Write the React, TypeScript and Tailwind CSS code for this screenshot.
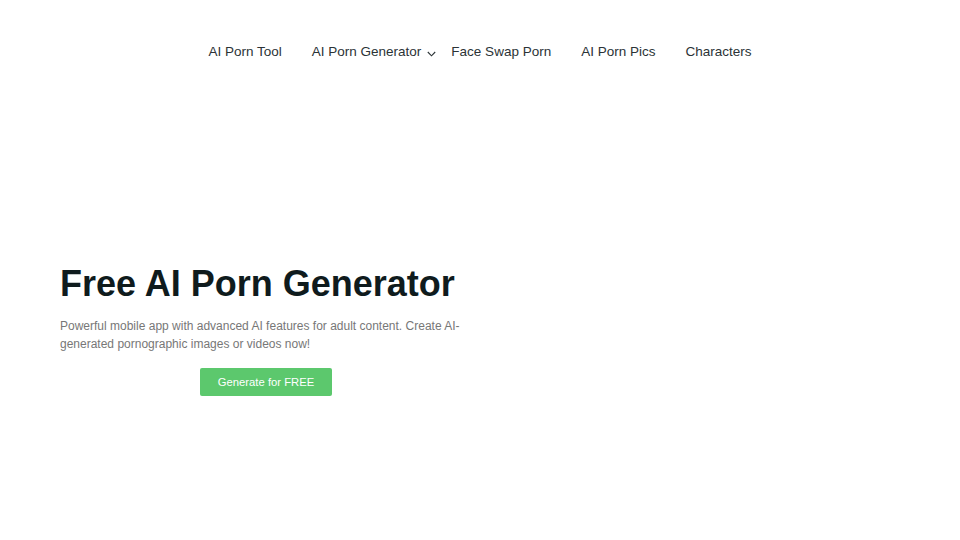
import React from "react";

const navItems = ["AI Porn Tool", "AI Porn Generator", "Face Swap Porn", "AI Porn Pics", "Characters"];

export default function App() {
  return (
    <div className="w-[960px] h-[540px] bg-white overflow-hidden" style={{ fontFamily: '"Liberation Sans", Arial, sans-serif' }}>
      <nav className="h-[104px] flex items-center justify-center gap-[30px] text-[13.5px] text-[#2b3336]">
        {navItems.map((item) => (
          <span key={item} className="relative">
            {item}
            {item === "AI Porn Generator" && (
              <svg
                className="absolute left-full top-1/2 ml-[6px] mt-[-1px] w-[9px] h-[6px]"
                viewBox="0 0 9 6"
                fill="none"
                stroke="#2b3336"
                strokeWidth="1.1"
              >
                <path d="M0.8 1 L4.5 4.8 L8.2 1" />
              </svg>
            )}
          </span>
        ))}
      </nav>
      <section className="pt-[158px] pl-[60px]">
        <div className="w-[412px] flex flex-col">
          <h1 className="text-[36px] leading-[1.2] font-bold text-[#0f1b1d]">Free AI Porn Generator</h1>
          <p className="mt-[12px] text-[12px] leading-[18px] text-[#777777]">
            Powerful mobile app with advanced AI features for adult content. Create AI-generated pornographic images or videos now!
          </p>
          <button className="mt-[15px] self-center h-[28px] px-[18px] rounded-[2px] bg-[#5cc86d] text-white text-[11.25px]">
            Generate for FREE
          </button>
        </div>
      </section>
    </div>
  );
}
